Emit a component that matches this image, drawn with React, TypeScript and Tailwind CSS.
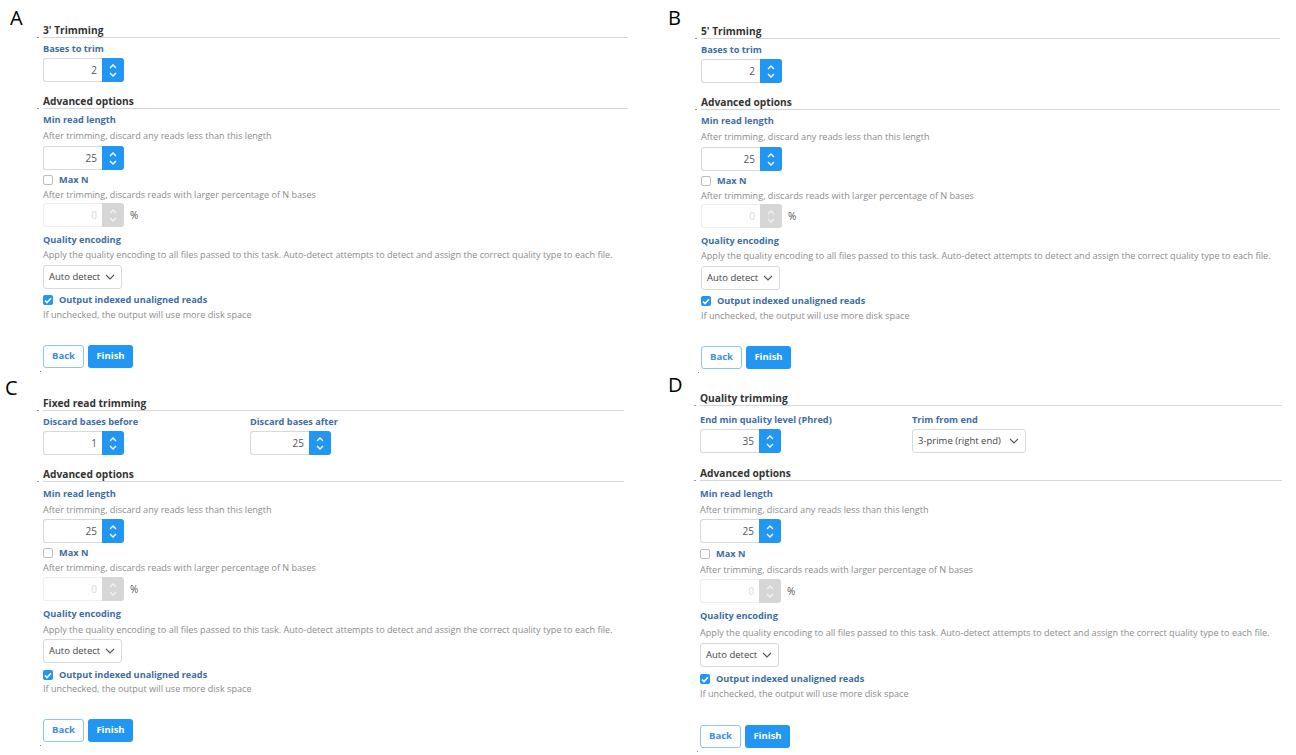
import React from "react";

const font = { fontFamily: '"Open Sans", "Noto Sans", sans-serif' };

// vertical gaps of the "Advanced options" block, one list per panel layout
const gapsA = ["mt-[12px]", "mt-[4px]", "mt-[2px]", "mt-[3px]", "mt-[3px]", "mt-px", "mt-px", "mt-[6px]", "mt-px", "mt-[3px]", "mt-[4px]", "mt-px", "mt-[23px]"];
const gapsC = ["mt-[12px]", "mt-[5px]", "mt-[2px]", "mt-[2px]", "mt-[3px]", "mt-px", "mt-[2px]", "mt-[6px]", "mt-[2px]", "mt-[2px]", "mt-[5px]", "mt-0", "mt-[23px]"];
const gapsD = ["mt-[13px]", "mt-[6px]", "mt-[2px]", "mt-[2px]", "mt-[4px]", "mt-[2px]", "mt-[2px]", "mt-[6px]", "mt-[3px]", "mt-[3px]", "mt-[5px]", "mt-px", "mt-[24px]"];

function Chevrons({ disabled }: { disabled?: boolean }) {
  return (
    <div
      className={
        "flex w-[22px] flex-col items-center justify-center gap-[3px] rounded-r-[3px] " +
        (disabled ? "bg-[#d6d6d6]" : "bg-[#2196f3]")
      }
    >
      <svg width="8" height="5" viewBox="0 0 8 5">
        <path d="M1 4 L4 1 L7 4" fill="none" stroke={disabled ? "#f2f2f2" : "#fff"} strokeWidth="1.4" />
      </svg>
      <svg width="8" height="5" viewBox="0 0 8 5">
        <path d="M1 1 L4 4 L7 1" fill="none" stroke={disabled ? "#f2f2f2" : "#fff"} strokeWidth="1.4" />
      </svg>
    </div>
  );
}

function NumInput({ value, disabled }: { value: string; disabled?: boolean }) {
  return (
    <div className="flex h-6 w-[81px]">
      <div
        className={
          "flex w-[59px] items-center justify-end rounded-l-[3px] border border-r-0 pr-[5px] text-[10px] " +
          (disabled ? "border-[#f0f0f0] text-[#d8d8d8]" : "border-[#d9d9d9] text-[#555]")
        }
      >
        {value}
      </div>
      <Chevrons disabled={disabled} />
    </div>
  );
}

function Select({ value, w }: { value: string; w: string }) {
  return (
    <div className={"flex h-6 items-center justify-between rounded-[3px] border border-[#d9d9d9] pl-[5px] pr-[6px] text-[9.5px] text-[#444] " + w}>
      <span className="whitespace-nowrap">{value}</span>
      <svg width="10" height="6" viewBox="0 0 10 6" className="shrink-0">
        <path d="M1 1 L5 5 L9 1" fill="none" stroke="#555" strokeWidth="1.1" />
      </svg>
    </div>
  );
}

function Heading({ children }: { children: React.ReactNode }) {
  return (
    <div className="relative border-b border-[#d6d6d6] text-[10.2px] font-bold leading-[14px] text-[#333]">
      <span className="absolute left-[-6px] bottom-[-1px] h-px w-[2px] bg-[#9a9a9a]" />
      {children}
    </div>
  );
}

function Label({ children }: { children: React.ReactNode }) {
  return <div className="whitespace-nowrap text-[9.2px] font-bold leading-[14px] text-[#3d6da3]">{children}</div>;
}

function Desc({ children }: { children: React.ReactNode }) {
  return <div className="whitespace-nowrap text-[9.1px] leading-[14px] text-[#8c8c8c]">{children}</div>;
}

function Check({ checked, children }: { checked?: boolean; children: React.ReactNode }) {
  return (
    <div className="flex items-center gap-[6px]">
      {checked ? (
        <div className="flex h-[10px] w-[10px] items-center justify-center rounded-[2px] bg-[#2196f3]">
          <svg width="8" height="7" viewBox="0 0 8 7">
            <path d="M1 3.5 L3 5.5 L7 1.2" fill="none" stroke="#fff" strokeWidth="1.6" />
          </svg>
        </div>
      ) : (
        <div className="h-[10px] w-[10px] rounded-[2px] border border-[#bdbdbd] bg-white" />
      )}
      <Label>{children}</Label>
    </div>
  );
}

function Advanced({ g }: { g: string[] }) {
  return (
    <>
      <div className={g[0]}>
        <Heading>Advanced options</Heading>
      </div>
      <div className={g[1]}>
        <Label>Min read length</Label>
      </div>
      <div className={g[2]}>
        <Desc>After trimming, discard any reads less than this length</Desc>
      </div>
      <div className={g[3]}>
        <NumInput value="25" />
      </div>
      <div className={g[4]}>
        <Check>Max N</Check>
      </div>
      <div className={g[5]}>
        <Desc>After trimming, discards reads with larger percentage of N bases</Desc>
      </div>
      <div className={"flex items-center gap-[6px] text-[10px] text-[#555] " + g[6]}>
        <NumInput value="0" disabled />
        <span>%</span>
      </div>
      <div className={g[7]}>
        <Label>Quality encoding</Label>
      </div>
      <div className={g[8]}>
        <Desc>
          Apply the quality encoding to all files passed to this task. Auto-detect attempts to detect and assign the
          correct quality type to each file.
        </Desc>
      </div>
      <div className={g[9]}>
        <Select value="Auto detect" w="w-[79px]" />
      </div>
      <div className={g[10]}>
        <Check checked>Output indexed unaligned reads</Check>
      </div>
      <div className={g[11]}>
        <Desc>If unchecked, the output will use more disk space</Desc>
      </div>
      <div className={"flex gap-1 " + g[12]}>
        <div className="flex h-[23px] w-[41px] items-center justify-center rounded-[3px] border border-[#8cc4f5] text-[9.5px] font-bold text-[#3d8fdc]">
          Back
        </div>
        <div className="flex h-[23px] w-[45px] items-center justify-center rounded-[3px] bg-[#2196f3] text-[9.5px] font-bold text-white">
          Finish
        </div>
      </div>
      <div className="ml-[-3px] mt-[3px] h-px w-px bg-[#888]" />
    </>
  );
}

function Panel({
  letter,
  top,
  letterCls,
  padCls,
  children,
}: {
  letter: string;
  top: string;
  letterCls: string;
  padCls: string;
  children: React.ReactNode;
}) {
  return (
    <div className="relative flex">
      <div className={"absolute text-[20px] leading-none text-black " + letterCls} style={{ fontFamily: '"Open Sans", sans-serif' }}>
        {letter}
      </div>
      <div className={"flex flex-col " + padCls + " " + top}>{children}</div>
    </div>
  );
}

export default function App() {
  return (
    <div className="h-[755px] w-[1296px] overflow-hidden bg-white" style={font}>
      <div className="grid h-[375px] grid-cols-[658px_638px]">
        <Panel letter="A" top="pt-[23px]" letterCls="left-[10px] top-[8px]" padCls="ml-[43px] w-[585px]">
          <Heading>3' Trimming</Heading>
          <div className="mt-[4px]">
            <Label>Bases to trim</Label>
          </div>
          <div className="mt-[2px]">
            <NumInput value="2" />
          </div>
          <Advanced g={gapsA} />
        </Panel>
        <Panel letter="B" top="pt-[24px]" letterCls="left-[10px] top-[8px]" padCls="ml-[43px] w-[579px]">
          <Heading>5' Trimming</Heading>
          <div className="mt-[4px]">
            <Label>Bases to trim</Label>
          </div>
          <div className="mt-[2px]">
            <NumInput value="2" />
          </div>
          <Advanced g={gapsA} />
        </Panel>
      </div>
      <div className="grid h-[380px] grid-cols-[658px_638px]">
        <Panel letter="C" top="pt-[21px]" letterCls="left-[5px] top-[3px]" padCls="ml-[43px] w-[581px]">
          <Heading>Fixed read trimming</Heading>
          <div className="mt-[4px] flex">
            <div className="w-[207px]">
              <Label>Discard bases before</Label>
              <div className="mt-[2px]">
                <NumInput value="1" />
              </div>
            </div>
            <div>
              <Label>Discard bases after</Label>
              <div className="mt-[2px]">
                <NumInput value="25" />
              </div>
            </div>
          </div>
          <Advanced g={gapsC} />
        </Panel>
        <Panel letter="D" top="pt-[16px]" letterCls="left-[10px] top-[0px]" padCls="ml-[42px] w-[582px]">
          <Heading>Quality trimming</Heading>
          <div className="mt-[7px] flex">
            <div className="w-[212px]">
              <Label>End min quality level (Phred)</Label>
              <div className="mt-[2px]">
                <NumInput value="35" />
              </div>
            </div>
            <div>
              <Label>Trim from end</Label>
              <div className="mt-[2px]">
                <Select value="3-prime (right end)" w="w-[114px]" />
              </div>
            </div>
          </div>
          <Advanced g={gapsD} />
        </Panel>
      </div>
    </div>
  );
}
